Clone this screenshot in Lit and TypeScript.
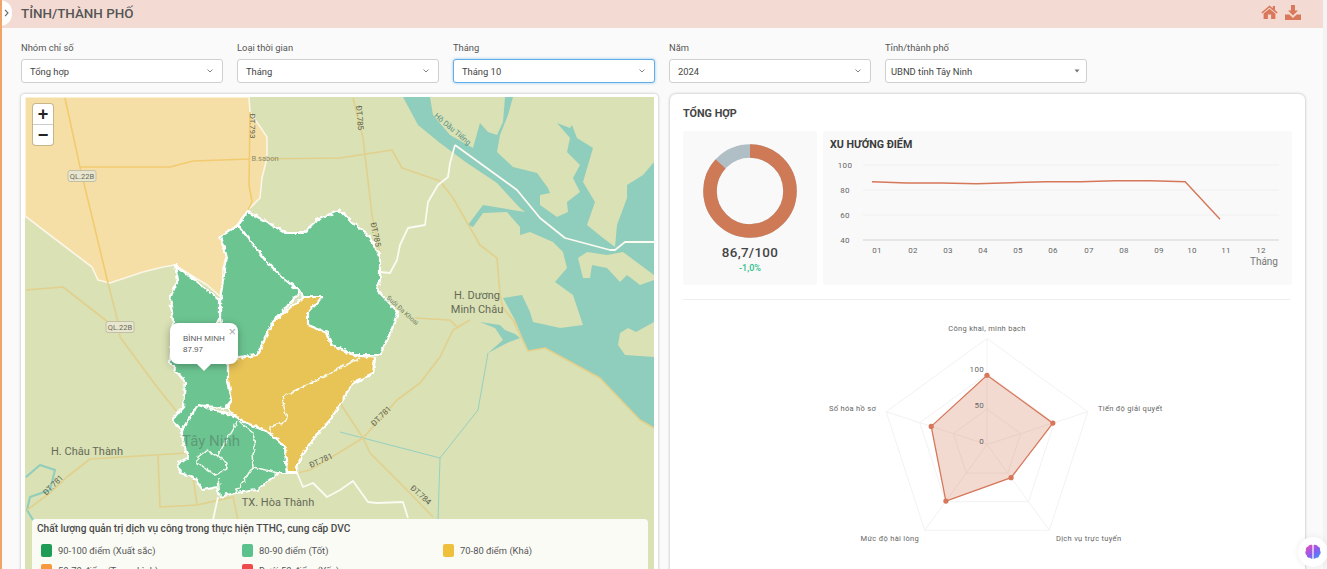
import { LitElement, css, html, svg } from 'lit'
import { customElement } from 'lit/decorators.js'

const FONT = css`Roboto, 'Liberation Sans', sans-serif`

// coordinates below are page pixels, the svg viewBox starts at the map's corner
const WATER = '403,97 430,97 433,115 450,135 473,148 480,123 488,132 497,135 503,122 505,97 513,97 508,115 500,135 497,152 513,167 537,173 548,188 550,193 540,195 540,205 557,217 568,212 567,202 580,192 573,178 580,165 567,152 570,138 557,123 570,128 572,125 577,138 593,148 588,165 583,182 595,202 587,225 603,238 615,247 617,225 627,198 627,185 643,175 654,162 654,428 640,420 600,378 545,348 528,351 515,320 503,298 522,295 530,312 533,322 560,328 583,325 573,295 555,282 567,268 563,252 553,242 530,232 520,235 520,227 507,212 483,213 473,227 468,225 483,205 525,212 520,208 497,183 467,163 440,143 418,125'
const ISLANDS = [
  '578,258 587,252 607,255 623,252 654,275 654,280 640,285 627,275 620,282 607,268 592,265 590,278 583,278',
  '618,345 620,333 628,328 636,332 654,322 654,357 625,355',
]
const PONDS = '488,353 507,343 520,338 515,334 505,330 500,325 480,322 495,328 503,340'

const ROADS = [
  '65,98 80,167 108,283 118,322 120,337 137,360 157,387 178,413',
  '80,167 170,167 193,161 250,159 340,158 392,150 402,168 440,181 453,198 480,245 497,258 500,295 503,308 517,325',
  '250,112 249,185 252,202 248,210',
  '353,98 363,138 372,215 380,252',
  '26,290 63,287 108,322',
  '470,320 453,330 440,357 420,383 397,400 363,438 340,452 310,470 297,473',
  '340,403 363,438 370,453 407,490 433,517',
  '187,453 90,459 67,477 50,493 27,510',
  '158,456 160,507 197,505 233,497 238,520',
  '193,477 197,505',
  '513,320 528,351 545,348 600,378 640,420 654,428',
  '415,318 450,320 458,328',
]
const STREAMS = [
  '488,353 478,410 440,458 438,520',
  '340,432 440,458',
]
const RIVER = '26,477 40,465 55,470 50,490 30,497 27,510 33,520'

const BORDERS = [
  '455,145 517,190 540,218 565,238 610,250 615,250 625,242 654,242',
  '455,145 450,163 448,177 438,185 428,202 425,225 408,228 400,245 397,260 390,273 380,272',
  '218,497 213,520',
  '287,473 297,473 303,487 313,483 327,497 340,490 353,481 368,502 377,503 403,502 408,518',
]

const NEIGHBOUR = '25,97 249,97 250,112 267,137 267,158 262,178 260,198 248,210 237,225 220,238 228,250 223,268 222,298 207,285 175,265 163,267 143,272 110,283 98,280 92,267 63,245 25,216'

const GREEN_DISTRICTS = [
  '248,212 267,222 287,233 303,233 317,220 340,210 353,223 370,237 380,257 380,280 377,290 398,312 390,333 380,355 353,355 332,345 327,333 308,325 307,313 322,297 303,297 300,290 283,278 265,260 238,225',
  '238,225 265,260 283,278 300,292 273,322 257,355 230,358 220,318 220,300 223,280 227,257 220,237',
  '175,265 195,280 220,300 220,317 217,323 228,363 228,380 232,400 225,408 198,405 182,430 172,420 183,407 185,382 170,363 173,320 170,298 178,280',
  '198,405 237,417 240,420 268,432 285,447 287,473 278,473 257,490 235,493 220,497 217,487 203,490 193,477 180,473 178,462 188,458 182,437 182,430',
]
const YELLOW_DISTRICT = '303,297 322,297 308,313 308,325 327,333 332,345 353,355 375,358 373,373 353,383 343,400 330,420 310,443 298,463 297,473 287,473 285,447 270,433 240,420 227,408 232,400 228,380 228,360 257,355 273,322'
const INNER_LINES = [
  '360,358 282,397 287,420 270,427 270,433',
  '237,422 218,455',
  '240,422 253,433 255,447 252,453 253,467 235,493',
  '253,467 278,473',
  '207,450 218,457 227,463 225,470 215,475 198,463 198,457 207,450',
  '218,478 220,497',
]

type MapLabel = { text: string; x: number; y: number; angle?: number; size?: number; color?: string }

const PLACE_LABELS: MapLabel[] = [
  { text: 'H. Dương', x: 477, y: 299, size: 11, color: '#666a58' },
  { text: 'Minh Châu', x: 477, y: 313, size: 11, color: '#666a58' },
  { text: 'H. Châu Thành', x: 87, y: 455, size: 11, color: '#666a58' },
  { text: 'TX. Hòa Thành', x: 278, y: 506, size: 11, color: '#666a58' },
  { text: 'Tây Ninh', x: 211, y: 446, size: 15, color: '#5f9a78' },
]
const ROAD_LABELS: MapLabel[] = [
  { text: 'ĐT.793', x: 250, y: 126, angle: 90 },
  { text: 'ĐT.785', x: 357, y: 118, angle: 85 },
  { text: 'ĐT.785', x: 373, y: 235, angle: 78 },
  { text: 'ĐT.781', x: 383, y: 418, angle: -45 },
  { text: 'ĐT.781', x: 322, y: 463, angle: -24 },
  { text: 'ĐT.781', x: 55, y: 487, angle: -45 },
  { text: 'ĐT.784', x: 419, y: 497, angle: 42 },
  { text: 'Hồ Dầu Tiếng', x: 451, y: 131, angle: 40, color: '#4f8f86', size: 7.5 },
  { text: 'Suối Đa Khoai', x: 401, y: 312, angle: 42, color: '#6d7d60', size: 6.5 },
  { text: 'B.sabon', x: 265, y: 161, color: '#8d8a66', size: 7.5 },
]

const LEGEND = [
  { color: '#1f9d57', label: '90-100 điểm (Xuất sắc)' },
  { color: '#5cc28d', label: '80-90 điểm (Tốt)' },
  { color: '#efc03c', label: '70-80 điểm (Khá)' },
  { color: '#f6993c', label: '50-70 điểm (Trung bình)' },
  { color: '#ee4c4c', label: 'Dưới 50 điểm (Yếu)' },
]

@customElement('province-map')
export class ProvinceMap extends LitElement {
  private lines(points: string[], cls: string) {
    return points.map((p) => svg`<polyline class=${cls} points=${p}></polyline>`)
  }

  private label(item: MapLabel, cls: string) {
    const rotate = item.angle ? `rotate(${item.angle} ${item.x} ${item.y})` : ''
    return svg`<text
      class=${cls}
      x=${item.x}
      y=${item.y}
      transform=${rotate}
      font-size=${item.size ?? 8}
      fill=${item.color ?? '#5e6350'}
    >${item.text}</text>`
  }

  private shield(text: string, x: number, y: number) {
    return svg`
      <rect class="shield" x=${x - 14} y=${y - 5.5} width="28" height="11" rx="2"></rect>
      <text class="place" x=${x} y=${y + 3} font-size="7.5" fill="#6a6a58">${text}</text>
    `
  }

  render() {
    return html`
      <svg viewBox="25 97 629 480" width="629" height="480">
        <defs>
          <filter id="rough" x="-5%" y="-5%" width="110%" height="110%" color-interpolation-filters="sRGB">
            <feTurbulence type="fractalNoise" baseFrequency="0.2" numOctaves="2" seed="4" result="noise"></feTurbulence>
            <feDisplacementMap
              in="SourceGraphic"
              in2="noise"
              scale="5"
              xChannelSelector="R"
              yChannelSelector="G"
            ></feDisplacementMap>
          </filter>
        </defs>
        <rect x="25" y="97" width="629" height="480" fill="#d9e1b5"></rect>
        <polygon class="water" points=${WATER}></polygon>
        <polygon class="water" points=${PONDS}></polygon>
        ${ISLANDS.map((p) => svg`<polygon points=${p} fill="#d9e1b5"></polygon>`)}
        <polyline class="river" points=${RIVER}></polyline>
        ${this.lines(STREAMS, 'stream')}
        ${this.lines(ROADS, 'road')}
        <polygon class="neighbour" points=${NEIGHBOUR}></polygon>
        <polyline class="road-warm" points="65,98 80,167 108,283"></polyline>
        <polyline class="road-warm" points="80,167 170,167 193,161 250,159"></polyline>
        <polyline class="road-warm" points="250,112 249,185 252,202 248,210"></polyline>
        ${this.lines(BORDERS, 'border')}
        <g filter="url(#rough)">
          ${GREEN_DISTRICTS.map((p) => svg`<polygon class="district green" points=${p}></polygon>`)}
          <polygon class="district yellow" points=${YELLOW_DISTRICT}></polygon>
          ${this.lines(INNER_LINES, 'inner')}
        </g>
        ${PLACE_LABELS.map((l) => this.label(l, 'place'))}
        ${ROAD_LABELS.map((l) => this.label(l, 'place'))}
        ${this.shield('QL.22B', 82, 176)}
        ${this.shield('QL.22B', 120, 327)}
      </svg>

      <div class="zoom">
        <button>+</button>
        <button>−</button>
      </div>

      <div class="popup">
        <span class="close">×</span>
        <div>BÌNH MINH</div>
        <div>87.97</div>
      </div>

      <div class="legend">
        <div class="legend-title">Chất lượng quản trị dịch vụ công trong thực hiện TTHC, cung cấp DVC</div>
        <div class="legend-grid">
          ${LEGEND.map(
            (item) => html`
              <div class="legend-item">
                <i style="background:${item.color}"></i>
                <span>${item.label}</span>
              </div>
            `,
          )}
        </div>
      </div>
    `
  }

  static styles = css`
    :host {
      display: block;
      height: 480px;
      overflow: hidden;
      position: relative;
      font-family: ${FONT};
    }
    svg {
      display: block;
    }
    .water {
      fill: #8fcdbd;
    }
    .neighbour {
      fill: #f5dfa7;
      stroke: #fbf6e6;
      stroke-width: 1.6;
    }
    polyline {
      fill: none;
      stroke-linejoin: round;
    }
    .road {
      stroke: #e2d08c;
      stroke-width: 1.6;
    }
    .road-warm {
      stroke: #f2cb70;
      stroke-width: 1.6;
    }
    .stream {
      stroke: #97d0c0;
      stroke-width: 1;
    }
    .river {
      stroke: #8fcdbd;
      stroke-width: 2;
    }
    .border {
      stroke: #fbfbf2;
      stroke-width: 1.8;
    }
    .district {
      stroke: #fff;
      stroke-width: 2.2;
      stroke-linejoin: round;
    }
    .green {
      fill: #6cc591;
    }
    .yellow {
      fill: #e8c355;
    }
    .inner {
      stroke: #f6fbf2;
      stroke-width: 1.5;
    }
    .place {
      text-anchor: middle;
      font-family: ${FONT};
    }
    .shield {
      fill: #e9e6cf;
      stroke: #b9b8a0;
      stroke-width: 0.8;
    }
    .zoom {
      position: absolute;
      left: 8px;
      top: 7px;
      width: 20px;
      background: #fff;
      border-radius: 3px;
      box-shadow: 0 0 0 1px rgba(0, 0, 0, 0.18);
      display: flex;
      flex-direction: column;
    }
    .zoom button {
      all: unset;
      height: 20px;
      text-align: center;
      font: 700 18px/20px 'Liberation Sans', sans-serif;
      color: #222;
    }
    .zoom button + button {
      border-top: 1px solid #ccc;
    }
    .popup {
      position: absolute;
      left: 145px;
      top: 226px;
      width: 68px;
      height: 41px;
      box-sizing: border-box;
      padding: 10px 0 0 13px;
      background: #fff;
      border-radius: 8px;
      box-shadow: 0 2px 8px rgba(0, 0, 0, 0.3);
      font: 8px/11px 'Liberation Sans', sans-serif;
      color: #555;
    }
    .popup::after {
      content: '';
      position: absolute;
      left: 27px;
      bottom: -7px;
      border: 7px solid transparent;
      border-bottom: 0;
      border-top-color: #fff;
    }
    .close {
      position: absolute;
      right: 2px;
      top: 2px;
      font-size: 13px;
      line-height: 13px;
      color: #aaa;
    }
    .legend {
      position: absolute;
      left: 7px;
      top: 422px;
      width: 616px;
      box-sizing: border-box;
      padding: 4px 5px;
      background: rgba(255, 255, 255, 0.86);
      border-radius: 4px;
      font-size: 9.4px;
      color: #555;
    }
    .legend-title {
      font-weight: 500;
      font-size: 10.1px;
      line-height: 12px;
      color: #4a4a4a;
      margin-bottom: 9px;
    }
    .legend-grid {
      display: grid;
      grid-template-columns: repeat(3, 201px);
      row-gap: 7px;
      padding-left: 4px;
    }
    .legend-item {
      display: flex;
      align-items: center;
      gap: 6px;
      height: 13px;
    }
    .legend-item i {
      width: 11px;
      height: 13px;
      border-radius: 2px;
    }
  `
}

const SCORES = [181.7, 183, 183, 183.7, 182.7, 181.7, 181.7, 180.7, 180.7, 181.7, 219.3]
const MONTHS = ['01', '02', '03', '04', '05', '06', '07', '08', '09', '10', '11', '12']
const MONTH_X = [877, 913, 948, 983, 1018, 1053, 1089, 1124, 1159, 1192, 1226, 1261]

@customElement('trend-chart')
export class TrendChart extends LitElement {
  render() {
    const points = SCORES.map((y, i) => `${872 + i * 34.8},${y}`).join(' ')
    return html`
      <svg viewBox="823 131 469 154" width="469" height="154">
        <text class="title" x="830" y="148">XU HƯỚNG ĐIỂM</text>
        ${[
          { y: 165, label: '100' },
          { y: 190, label: '80' },
          { y: 215, label: '60' },
        ].map(
          (row) => svg`
            <line class="grid" x1="863" x2="1279" y1=${row.y} y2=${row.y}></line>
            <text class="tick" x="845" y=${row.y + 3}>${row.label}</text>
          `,
        )}
        <line class="base" x1="863" x2="1279" y1="240" y2="240"></line>
        <text class="tick" x="845" y="243">40</text>
        ${MONTHS.map((m, i) => svg`<text class="tick" x=${MONTH_X[i]} y="253">${m}</text>`)}
        <text class="unit" x="1278" y="265">Tháng</text>
        <polyline class="trend" points=${points}></polyline>
      </svg>
    `
  }

  static styles = css`
    :host {
      display: block;
      font-family: ${FONT};
    }
    svg {
      display: block;
    }
    text {
      font-family: ${FONT};
    }
    .title {
      font-size: 10.7px;
      font-weight: 700;
      fill: #3c3c3c;
    }
    .grid {
      stroke: #f0f0f0;
    }
    .base {
      stroke: #e6e6e6;
      stroke-width: 2;
    }
    .tick {
      font-size: 8px;
      fill: #666;
      text-anchor: middle;
      letter-spacing: 0.3px;
    }
    .unit {
      font-size: 10px;
      fill: #777;
      text-anchor: end;
    }
    .trend {
      fill: none;
      stroke: #d6775a;
      stroke-width: 1.4;
    }
  `
}

const RADAR_CX = 987
const RADAR_CY = 444.5
const RADAR_R = 106
const RADAR_VALUES = [98, 98, 58, 99, 83]
const RADAR_LABELS = [
  { text: 'Công khai, minh bạch', x: 987, y: 331, anchor: 'middle' },
  { text: 'Tiến độ giải quyết', x: 1098, y: 411, anchor: 'start' },
  { text: 'Dịch vụ trực tuyến', x: 1056, y: 541, anchor: 'start' },
  { text: 'Mức độ hài lòng', x: 919, y: 541, anchor: 'end' },
  { text: 'Số hóa hồ sơ', x: 876, y: 411, anchor: 'end' },
]

function radarPoint(index: number, radius: number) {
  const angle = (index * 2 * Math.PI) / 5 - Math.PI / 2
  return [RADAR_CX + radius * Math.cos(angle), RADAR_CY + radius * Math.sin(angle)]
}

function ring(radius: number) {
  return [0, 1, 2, 3, 4].map((i) => radarPoint(i, radius).join(',')).join(' ')
}

@customElement('radar-chart')
export class RadarChart extends LitElement {
  render() {
    const dots = RADAR_VALUES.map((v, i) => radarPoint(i, (v / 150) * RADAR_R))
    return html`
      <svg viewBox="820 310 350 259" width="350" height="259">
        ${[1, 2, 3].map((n) => svg`<polygon class="ring" points=${ring((n * RADAR_R) / 3)}></polygon>`)}
        ${[0, 1, 2, 3, 4].map((i) => {
          const [x, y] = radarPoint(i, RADAR_R)
          return svg`<line class="ring" x1=${RADAR_CX} y1=${RADAR_CY} x2=${x} y2=${y}></line>`
        })}
        <polygon class="area" points=${dots.map((d) => d.join(',')).join(' ')}></polygon>
        ${dots.map(([x, y]) => svg`<circle class="dot" cx=${x} cy=${y} r="2.6"></circle>`)}
        <text class="tick" x="984" y="372">100</text>
        <text class="tick" x="984" y="408">50</text>
        <text class="tick" x="984" y="444">0</text>
        ${RADAR_LABELS.map(
          (l) => svg`<text class="axis" x=${l.x} y=${l.y} text-anchor=${l.anchor}>${l.text}</text>`,
        )}
      </svg>
    `
  }

  static styles = css`
    :host {
      display: block;
      font-family: ${FONT};
    }
    svg {
      display: block;
    }
    text {
      font-family: ${FONT};
    }
    .ring {
      fill: none;
      stroke: #f2f2f2;
      stroke-width: 1;
    }
    .area {
      fill: rgba(209, 121, 90, 0.28);
      stroke: #d6775a;
      stroke-width: 1.3;
    }
    .dot {
      fill: #d6775a;
    }
    .tick {
      font-size: 8px;
      fill: #666;
      text-anchor: end;
      letter-spacing: 0.3px;
    }
    .axis {
      font-size: 7.5px;
      fill: #666;
      letter-spacing: 0.3px;
    }
  `
}

const FILTERS = [
  { label: 'Nhóm chỉ số', value: 'Tổng hợp' },
  { label: 'Loại thời gian', value: 'Tháng' },
  { label: 'Tháng', value: 'Tháng 10', active: true },
  { label: 'Năm', value: '2024' },
  { label: 'Tỉnh/thành phố', value: 'UBND tỉnh Tây Ninh', caret: true },
]

@customElement('app-root')
export class AppRoot extends LitElement {
  private donut() {
    const r = 40
    const length = 2 * Math.PI * r
    const share = 0.867
    return svg`
      <svg viewBox="0 0 94 94" width="94" height="94" class="donut">
        <g transform="rotate(-90 47 47)">
          <circle cx="47" cy="47" r=${r} class="arc-rest"></circle>
          <circle
            cx="47"
            cy="47"
            r=${r}
            class="arc-score"
            stroke-dasharray="${length * share} ${length}"
          ></circle>
        </g>
      </svg>
    `
  }

  private filter(item: (typeof FILTERS)[number]) {
    return html`
      <label class="filter">
        <span class="filter-label">${item.label}</span>
        <span class="select ${item.active ? 'active' : ''} ${item.caret ? 'plain' : ''}">
          <span>${item.value}</span>
          ${item.caret
            ? html`<svg width="6" height="4" viewBox="0 0 6 4"><path d="M0.5 0.5h5L3 3.5z" fill="#777"></path></svg>`
            : html`<svg width="6" height="4" viewBox="0 0 6 4"><path d="M0.5 0.5L3 3l2.5-2.5" fill="none" stroke="#777" stroke-width="0.9"></path></svg>`}
        </span>
      </label>
    `
  }

  render() {
    return html`
      <header class="topbar">
        <div class="side-tab">
          <svg width="5" height="8" viewBox="0 0 5 8"><path d="M1 0.8L4 4 1 7.2" fill="none" stroke="#666" stroke-width="1.1"></path></svg>
        </div>
        <h1>TỈNH/THÀNH PHỐ</h1>
        <div class="top-actions">
          <svg width="17" height="14" viewBox="0 0 17 14">
            <path d="M8.5 0.5L0.3 7.4l1 1.1L8.5 2.6l7.2 5.9 1-1.1-2.7-2.3V1h-2.2v2.3z"></path>
            <path d="M8.5 3.8L2.6 8.6V14h4.3V9.6h3.2V14h4.3V8.6z"></path>
          </svg>
          <svg width="16" height="15" viewBox="0 0 16 15">
            <path d="M6 0h4v5.5h3L8 10.6 3 5.5h3z"></path>
            <path d="M0 9.4h4.4L8 13l3.6-3.6H16V15H0z"></path>
          </svg>
        </div>
      </header>

      <section class="filters">${FILTERS.map((f) => this.filter(f))}</section>

      <main class="content">
        <div class="map-card"><province-map></province-map></div>
        <div class="summary-card">
          <h2>TỔNG HỢP</h2>
          <div class="summary-top">
            <div class="score-panel">
              ${this.donut()}
              <div class="score">86,7/100</div>
              <div class="delta">-1,0%</div>
            </div>
            <div class="trend-panel"><trend-chart></trend-chart></div>
          </div>
          <hr />
          <radar-chart></radar-chart>
        </div>
      </main>

      <div class="assistant">
        <svg width="18" height="18" viewBox="0 0 18 18">
          <defs>
            <linearGradient id="brain" x1="0" y1="0" x2="1" y2="1">
              <stop offset="0" stop-color="#f24fb0"></stop>
              <stop offset="0.55" stop-color="#8a5cf0"></stop>
              <stop offset="1" stop-color="#2f9df5"></stop>
            </linearGradient>
          </defs>
          <path
            d="M8.4 2.2C6.6 1.2 4.6 2 4.2 3.6 2.4 4 1.4 5.8 2 7.4.9 8.8 1.2 11 2.6 12c0 1.8 1.8 3.2 3.4 2.8 1 1 2 1 2.4.6zM9.6 2.2c1.8-1 3.8-.2 4.2 1.4 1.8.4 2.8 2.2 2.2 3.8 1.1 1.4.8 3.6-.6 4.6 0 1.8-1.8 3.2-3.4 2.8-1 1-2 1-2.4.6z"
            fill="url(#brain)"
          ></path>
        </svg>
      </div>
      <div class="scroll-track"></div>
    `
  }

  static styles = css`
    :host {
      display: block;
      position: relative;
      height: 569px;
      overflow: hidden;
      background: #fafafa;
      border-left: 2px solid #f0a566;
      box-sizing: border-box;
      font-family: ${FONT};
      color: #444;
    }
    .topbar {
      height: 28px;
      margin-left: -2px;
      margin-right: 4px;
      padding-left: 21px;
      padding-right: 22px;
      display: flex;
      align-items: center;
      justify-content: space-between;
      background: #f3dbd3;
      position: relative;
    }
    .side-tab {
      position: absolute;
      left: 0;
      top: 0;
      width: 12px;
      height: 26px;
      background: #fff;
      border-radius: 0 13px 13px 0;
      display: flex;
      align-items: center;
      padding-left: 4px;
      box-sizing: border-box;
    }
    h1 {
      margin: 0 0 2px;
      font-size: 13.4px;
      font-weight: 500;
      color: #555;
    }
    .top-actions {
      display: flex;
      gap: 7px;
      margin-bottom: 4px;
      fill: #d9785b;
    }
    .filters {
      display: flex;
      gap: 14px;
      padding: 13px 0 0 19px;
    }
    .filter {
      display: flex;
      flex-direction: column;
      gap: 5px;
      width: 202px;
    }
    .filter-label {
      font-size: 9.4px;
      line-height: 13px;
      color: #555;
    }
    .select {
      height: 24px;
      box-sizing: border-box;
      border: 1px solid #d0d0d0;
      border-radius: 3px;
      background: #fff;
      padding: 0 9px 0 8px;
      display: flex;
      align-items: center;
      justify-content: space-between;
      font-size: 9.4px;
      color: #444;
    }
    .select.plain {
      padding: 0 6px 0 5px;
    }
    .select.active {
      border-color: #62ace8;
      box-shadow: 0 0 3px rgba(98, 172, 232, 0.7);
    }
    .content {
      display: flex;
      gap: 12px;
      padding: 11px 0 0 19px;
      align-items: flex-start;
    }
    .map-card {
      width: 629px;
      padding: 3px 4px;
      background: #fff;
      border-radius: 4px;
      box-shadow: 0 0 3px rgba(0, 0, 0, 0.3);
    }
    .summary-card {
      width: 635px;
      height: 500px;
      box-sizing: border-box;
      padding: 13px 13px 0;
      background: #fff;
      border-radius: 6px;
      box-shadow: 0 0 3px rgba(0, 0, 0, 0.3);
    }
    h2 {
      margin: 0;
      font-size: 10.8px;
      line-height: 13px;
      font-weight: 700;
      color: #444;
    }
    .summary-top {
      display: flex;
      gap: 6px;
      margin-top: 11px;
    }
    .score-panel {
      width: 134px;
      height: 154px;
      padding-top: 13px;
      box-sizing: border-box;
      background: #f9f9f9;
      border-radius: 3px;
      display: flex;
      flex-direction: column;
      align-items: center;
    }
    .donut {
      display: block;
    }
    .arc-rest,
    .arc-score {
      fill: none;
      stroke-width: 13.5;
    }
    .arc-rest {
      stroke: #b0bec5;
    }
    .arc-score {
      stroke: #cf7a57;
    }
    .score {
      margin-top: 7px;
      font-size: 13.4px;
      line-height: 16px;
      font-weight: 500;
      letter-spacing: 0.3px;
      color: #444;
    }
    .delta {
      margin-top: 1px;
      font-size: 9px;
      line-height: 12px;
      font-weight: 500;
      color: #2dbf8a;
    }
    .trend-panel {
      width: 469px;
      height: 154px;
      background: #f9f9f9;
      border-radius: 3px;
    }
    hr {
      margin: 14px 2px 0 0;
      border: 0;
      border-top: 1px solid #eee;
    }
    radar-chart {
      margin: 10px 0 0 137px;
    }
    .assistant {
      position: absolute;
      right: -1px;
      bottom: 2px;
      width: 30px;
      height: 30px;
      border-radius: 50%;
      background: #fff;
      box-shadow: 0 0 6px rgba(0, 0, 0, 0.08);
      display: flex;
      align-items: center;
      justify-content: center;
      z-index: 2;
    }
    .scroll-track {
      position: absolute;
      right: 0;
      top: 0;
      width: 4px;
      height: 100%;
      background: #f4f4f4;
    }
  `
}

declare global {
  interface HTMLElementTagNameMap {
    'app-root': AppRoot
    'province-map': ProvinceMap
    'trend-chart': TrendChart
    'radar-chart': RadarChart
  }
}
